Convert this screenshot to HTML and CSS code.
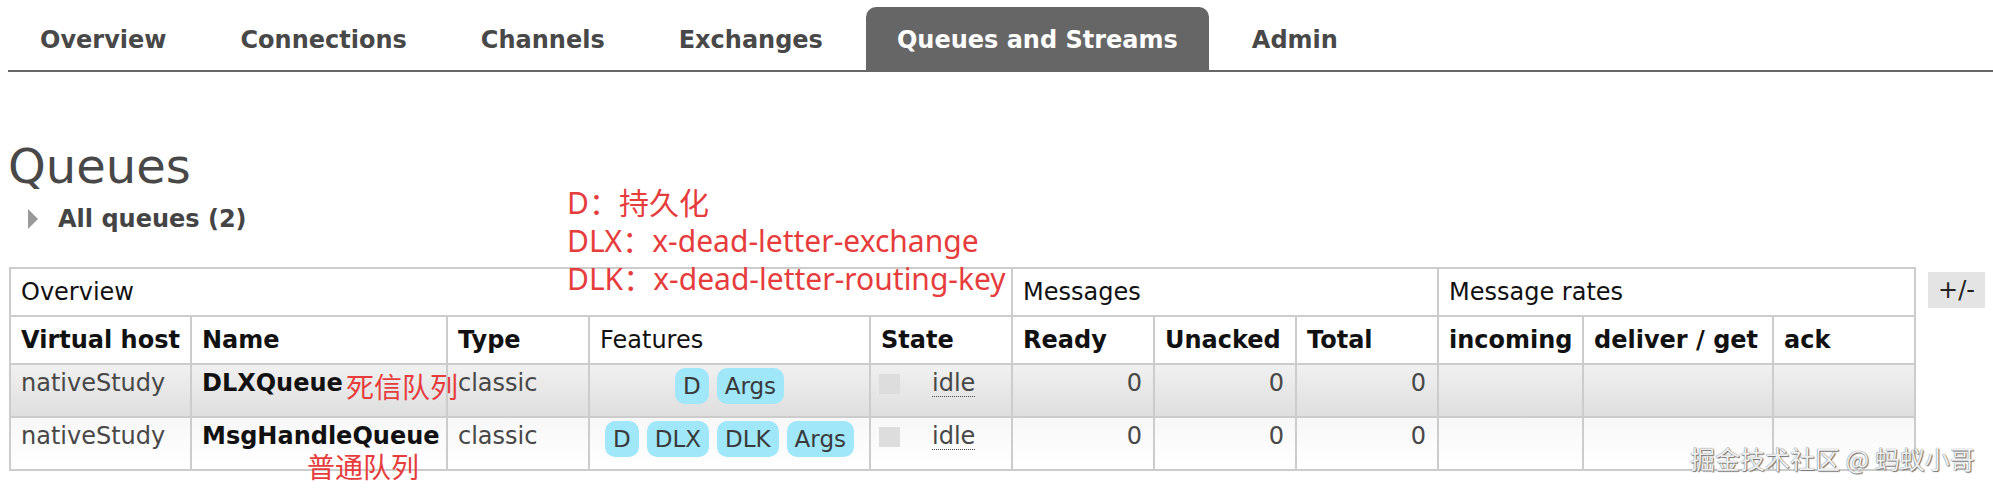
FILE: index.html
```html
<!DOCTYPE html>
<html lang="zh-CN">
<head>
  <meta charset="UTF-8">
  <title>RabbitMQ Management - Queues</title>
  <link rel="stylesheet" href="styles.css">
</head>
<body>

  <nav class="tabs">
    <a href="#">Overview</a>
    <a href="#">Connections</a>
    <a href="#">Channels</a>
    <a href="#">Exchanges</a>
    <a href="#" class="selected">Queues and Streams</a>
    <a href="#">Admin</a>
  </nav>

  <div class="page">
    <h1>Queues</h1>
    <div class="section-toggle"><span class="arrow"></span>All queues (2)</div>

    <div class="list-wrap">
      <table class="list">
        <colgroup>
          <col class="w-vhost">
          <col class="w-name">
          <col class="w-type">
          <col class="w-feat">
          <col class="w-num">
          <col class="w-num">
          <col class="w-num">
          <col class="w-num">
          <col class="w-in">
          <col class="w-deliver">
          <col class="w-num">
        </colgroup>
        <thead>
          <tr>
            <th colspan="5" class="plain">Overview</th>
            <th colspan="3" class="plain">Messages</th>
            <th colspan="3" class="plain">Message rates</th>
          </tr>
          <tr>
            <th>Virtual host</th>
            <th>Name</th>
            <th>Type</th>
            <th class="plain">Features</th>
            <th>State</th>
            <th>Ready</th>
            <th>Unacked</th>
            <th>Total</th>
            <th>incoming</th>
            <th>deliver / get</th>
            <th>ack</th>
          </tr>
        </thead>
        <tbody>
          <tr class="alt1">
            <td>nativeStudy</td>
            <td class="name">DLXQueue</td>
            <td>classic</td>
            <td class="features">
              <div class="badges"><abbr class="badge">D</abbr><abbr class="badge">Args</abbr></div>
            </td>
            <td class="state"><span class="state-key"></span><abbr class="state-text" title="idle">idle</abbr></td>
            <td class="r">0</td>
            <td class="r">0</td>
            <td class="r">0</td>
            <td></td>
            <td></td>
            <td></td>
          </tr>
          <tr class="alt2">
            <td>nativeStudy</td>
            <td class="name">MsgHandleQueue</td>
            <td>classic</td>
            <td class="features">
              <div class="badges"><abbr class="badge">D</abbr><abbr class="badge">DLX</abbr><abbr class="badge">DLK</abbr><abbr class="badge">Args</abbr></div>
            </td>
            <td class="state"><span class="state-key"></span><abbr class="state-text" title="idle">idle</abbr></td>
            <td class="r">0</td>
            <td class="r">0</td>
            <td class="r">0</td>
            <td></td>
            <td></td>
            <td></td>
          </tr>
        </tbody>
      </table>
      <span class="toggle-cols">+/-</span>
    </div>
  </div>

  <!-- hand-drawn notes on top of the screenshot -->
  <div class="note legend">
    <div>D：持久化</div>
    <div>DLX：x-dead-letter-exchange</div>
    <div>DLK：x-dead-letter-routing-key</div>
  </div>
  <div class="note tag-dlx">死信队列</div>
  <div class="note tag-normal">普通队列</div>

  <div class="watermark">掘金技术社区 @ 蚂蚁小哥</div>

</body>
</html>
```

FILE: styles.css
```css
body {
  margin: 0;
  font-family: "DejaVu Sans", Verdana, sans-serif;
  font-size: 24px;
  color: #484848;
  background: #fff;
  position: relative;
  min-height: 491px;
}

/* top menu */
.tabs {
  display: flex;
  margin: 7px 0 0 8px;
  padding-left: 1px;
  border-bottom: 2px solid #666;
}

.tabs a {
  display: block;
  padding: 4px 31px 0;
  line-height: 59px;
  margin-right: 12px;
  font-weight: bold;
  color: #484848;
  text-decoration: none;
  border-radius: 10px 10px 0 0;
}

.tabs a.selected {
  background: #666;
  color: #fff;
}

.page {
  padding: 0 8px;
}

h1 {
  margin: 66px 0 0;
  font-size: 48px;
  line-height: 56px;
  font-weight: normal;
  color: #484848;
}

.section-toggle {
  display: flex;
  align-items: center;
  gap: 20px;
  margin-top: 11px;
  height: 28px;
  line-height: 28px;
  font-weight: bold;
  color: #444;
}

.section-toggle .arrow {
  margin-left: 20px;
  border-left: 10px solid #999;
  border-top: 10px solid transparent;
  border-bottom: 10px solid transparent;
}

/* queue table */
.list-wrap {
  display: flex;
  align-items: flex-start;
  gap: 12px;
  margin-top: 34px;
}

table.list {
  border-collapse: collapse;
  table-layout: fixed;
  width: 1905px;
  margin-left: 1px;
  flex-shrink: 0;
}

.w-vhost { width: 181px; }
.w-name { width: 256px; }
.w-type { width: 142px; }
.w-feat { width: 281px; }
.w-num { width: 142px; }
.w-in { width: 145px; }
.w-deliver { width: 190px; }

table.list th,
table.list td {
  border: 2px solid #ccc;
  white-space: nowrap;
  text-align: left;
  line-height: 28px;
}

table.list th {
  padding: 9px 10px;
  font-weight: bold;
  color: #111;
}

table.list th.plain {
  font-weight: normal;
}

table.list td {
  padding: 4px 10px 19px;
  vertical-align: top;
}

tr.alt1 {
  background: linear-gradient(#f1f1f1, #dedede);
}

tr.alt2 {
  background: linear-gradient(#f7f7f7, #fff);
}

table.list td.name {
  font-weight: bold;
  color: #111;
}

table.list td.r {
  text-align: right;
  padding-right: 11px;
}

table.list td.features {
  padding: 3px 4px 12px;
}

.badges {
  display: flex;
  justify-content: center;
  gap: 8px;
}

.badge {
  display: block;
  padding: 0 8px;
  height: 36px;
  line-height: 36px;
  font-size: 23px;
  border-radius: 10px;
  background: #a0e7fa;
  color: #3a3a3a;
  text-decoration: none;
}

table.list td.state {
  padding-left: 8px;
}

.state-key {
  display: inline-block;
  width: 21px;
  height: 20px;
  background: #ddd;
  vertical-align: middle;
  margin-right: 32px;
}

.state-text {
  text-decoration: underline dotted 1px;
  text-underline-offset: 5px;
}

.toggle-cols {
  margin-top: 5px;
  padding: 0 10px;
  line-height: 36px;
  background: #e4e4e4;
  color: #222;
}

/* red notes */
.note {
  position: absolute;
  color: #e63c3c;
  font-family: "Noto Sans", "Noto Sans CJK SC", sans-serif;
  white-space: nowrap;
}

.legend {
  left: 567px;
  top: 184px;
  font-size: 30px;
  line-height: 38px;
}

.tag-dlx,
.tag-normal {
  font-family: "Noto Sans CJK SC", sans-serif;
  font-size: 28px;
  line-height: 28px;
}

.tag-dlx {
  left: 346px;
  top: 372px;
}

.tag-normal {
  left: 307px;
  top: 452px;
}

.watermark {
  position: absolute;
  left: 1690px;
  top: 446px;
  font-family: "Noto Sans CJK SC", sans-serif;
  font-size: 25px;
  line-height: 25px;
  color: #f0f0f0;
  text-shadow: 0 0 1px #555, 1px 1px 1px #777;
  white-space: nowrap;
}
```
